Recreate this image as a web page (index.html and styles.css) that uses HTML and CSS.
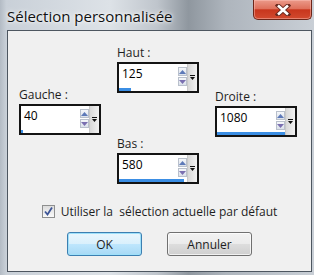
FILE: index.html
```html
<!DOCTYPE html>
<html lang="fr">
<head>
    <meta charset="UTF-8" />
    <title>Sélection personnalisée</title>
    <link rel="stylesheet" href="styles.css">
</head>
<body>
    <div class="window">
        <div class="title-bar">
            <span class="title-text">Sélection personnalisée</span>
            <button type="button" class="close-button" aria-label="Fermer">
                <svg width="16" height="12" viewBox="0 0 16 12"><path d="M3 1.5 L13 10.5 M13 1.5 L3 10.5" stroke="#6b2a20" stroke-width="4.5" stroke-linecap="square"/><path d="M3 1.5 L13 10.5 M13 1.5 L3 10.5" stroke="#fff" stroke-width="2.6"/></svg>
            </button>
        </div>

        <div class="client">
            <div class="fields">
                <div class="field-col field-left">
                    <div class="field">
                        <label class="field-label">Gauche :</label>
                        <div class="spin">
                            <div class="spin-main">
                                <div class="spin-row">
                                    <span class="spin-value">40</span>
                                    <div class="spin-arrows">
                                        <span class="spin-arrow"><svg width="7" height="4" viewBox="0 0 7 4"><path d="M0 4 L3.5 0 L7 4 Z" fill="#5d79b8"/></svg></span>
                                        <span class="spin-arrow"><svg width="7" height="4" viewBox="0 0 7 4"><path d="M0 0 L3.5 4 L7 0 Z" fill="#7a6fb0"/></svg></span>
                                    </div>
                                </div>
                                <div class="spin-bar" style="width: 3%"></div>
                            </div>
                            <div class="spin-drop">
                                <svg width="5" height="5" viewBox="0 0 5 5"><path d="M0 0.5 H5" stroke="#111" stroke-width="1"/><path d="M0 2 L5 2 L2.5 5 Z" fill="#111"/></svg>
                            </div>
                        </div>
                    </div>
                </div>

                <div class="field-col field-center">
                    <div class="field">
                        <label class="field-label">Haut :</label>
                        <div class="spin">
                            <div class="spin-main">
                                <div class="spin-row">
                                    <span class="spin-value">125</span>
                                    <div class="spin-arrows">
                                        <span class="spin-arrow"><svg width="7" height="4" viewBox="0 0 7 4"><path d="M0 4 L3.5 0 L7 4 Z" fill="#5d79b8"/></svg></span>
                                        <span class="spin-arrow"><svg width="7" height="4" viewBox="0 0 7 4"><path d="M0 0 L3.5 4 L7 0 Z" fill="#7a6fb0"/></svg></span>
                                    </div>
                                </div>
                                <div class="spin-bar" style="width: 18%"></div>
                            </div>
                            <div class="spin-drop">
                                <svg width="5" height="5" viewBox="0 0 5 5"><path d="M0 0.5 H5" stroke="#111" stroke-width="1"/><path d="M0 2 L5 2 L2.5 5 Z" fill="#111"/></svg>
                            </div>
                        </div>
                    </div>

                    <div class="field">
                        <label class="field-label">Bas :</label>
                        <div class="spin">
                            <div class="spin-main">
                                <div class="spin-row">
                                    <span class="spin-value">580</span>
                                    <div class="spin-arrows">
                                        <span class="spin-arrow"><svg width="7" height="4" viewBox="0 0 7 4"><path d="M0 4 L3.5 0 L7 4 Z" fill="#5d79b8"/></svg></span>
                                        <span class="spin-arrow"><svg width="7" height="4" viewBox="0 0 7 4"><path d="M0 0 L3.5 4 L7 0 Z" fill="#7a6fb0"/></svg></span>
                                    </div>
                                </div>
                                <div class="spin-bar" style="width: 96%"></div>
                            </div>
                            <div class="spin-drop">
                                <svg width="5" height="5" viewBox="0 0 5 5"><path d="M0 0.5 H5" stroke="#111" stroke-width="1"/><path d="M0 2 L5 2 L2.5 5 Z" fill="#111"/></svg>
                            </div>
                        </div>
                    </div>
                </div>

                <div class="field-col field-right">
                    <div class="field">
                        <label class="field-label">Droite :</label>
                        <div class="spin">
                            <div class="spin-main">
                                <div class="spin-row">
                                    <span class="spin-value">1080</span>
                                    <div class="spin-arrows">
                                        <span class="spin-arrow"><svg width="7" height="4" viewBox="0 0 7 4"><path d="M0 4 L3.5 0 L7 4 Z" fill="#5d79b8"/></svg></span>
                                        <span class="spin-arrow"><svg width="7" height="4" viewBox="0 0 7 4"><path d="M0 0 L3.5 4 L7 0 Z" fill="#7a6fb0"/></svg></span>
                                    </div>
                                </div>
                                <div class="spin-bar" style="width: 100%"></div>
                            </div>
                            <div class="spin-drop">
                                <svg width="5" height="5" viewBox="0 0 5 5"><path d="M0 0.5 H5" stroke="#111" stroke-width="1"/><path d="M0 2 L5 2 L2.5 5 Z" fill="#111"/></svg>
                            </div>
                        </div>
                    </div>
                </div>
            </div>

            <label class="check-row">
                <span class="checkbox">
                    <svg width="9" height="9" viewBox="0 0 9 9"><path d="M1 4.5 L3.5 7.5 L8 0.5" fill="none" stroke="#3d5597" stroke-width="1.8"/></svg>
                </span>
                <span class="check-text">Utiliser la&nbsp; sélection actuelle par défaut</span>
            </label>

            <div class="buttons">
                <button type="button" class="btn btn-default">OK</button>
                <button type="button" class="btn">Annuler</button>
            </div>
        </div>
    </div>
</body>
</html>
```

FILE: styles.css
```css
body {
    margin: 0;
    font-family: "Open Sans", "Noto Sans", sans-serif;
    font-size: 12px;
    color: #1e1e1e;
}

.window {
    width: 314px;
    height: 275px;
    box-sizing: border-box;
    padding: 0 2px 3px 7px;
    display: flex;
    flex-direction: column;
    background:
        linear-gradient(90deg, #b3bbc4 0, #c9d0d8 2%, #dde2e7 35%, #bfc5cc 50%, #8f979f 60%, #aeb5bd 72%, #c9cfd6 100%);
}

.title-bar {
    height: 30px;
    display: flex;
    justify-content: space-between;
    align-items: flex-start;
}

.title-text {
    font-size: 15px;
    line-height: 20px;
    padding-top: 6px;
    color: #111;
    text-shadow: 0 0 6px #fff, 0 0 3px #fff;
}

.close-button {
    width: 59px;
    height: 20px;
    padding: 0;
    border: 1px solid #6e2619;
    border-top: none;
    border-radius: 0 0 5px 5px;
    background: linear-gradient(#eb9a8a 0, #df715c 45%, #c8361d 52%, #d24a2f 100%);
    display: flex;
    justify-content: center;
    align-items: center;
    box-shadow: inset 0 0 0 1px rgba(255, 200, 190, .45);
}

.client {
    flex: 1;
    border: 1px solid #4d5660;
    background-color: #f0f0f0;
    display: flex;
    flex-direction: column;
}

.fields {
    display: flex;
    align-items: flex-start;
    gap: 16px;
    padding: 14px 0 0 11px;
}

.field-col {
    width: 82px;
}

.field-left {
    margin-top: 42px;
}

.field-right {
    margin-top: 44px;
}

.field-center {
    display: flex;
    flex-direction: column;
    gap: 43px;
}

.field-label {
    display: block;
    line-height: 16px;
    margin-bottom: 1px;
}

.spin {
    display: flex;
    height: 31px;
    box-sizing: border-box;
    border: 2px solid #141414;
    background: #fff;
}

.spin-main {
    flex: 1;
    display: flex;
    flex-direction: column;
}

.spin-row {
    flex: 1;
    display: flex;
    justify-content: space-between;
    padding: 2px 0 0 3px;
}

.spin-value {
    font-size: 12px;
    line-height: 16px;
    color: #000;
}

.spin-arrows {
    display: flex;
    flex-direction: column;
    gap: 1px;
    padding-top: 1px;
}

.spin-arrow {
    width: 9px;
    height: 9px;
    box-sizing: border-box;
    border: 1px solid #b9c0cc;
    background: linear-gradient(#f5f7fa, #dbe1ea);
    display: flex;
    justify-content: center;
    align-items: center;
}

.spin-bar {
    height: 3px;
    background-color: #3b8ee4;
}

.spin-drop {
    width: 9px;
    background: linear-gradient(90deg, #d8d8d8, #f2f2f2);
    border-left: 1px solid #c8c8c8;
    display: flex;
    justify-content: center;
    align-items: center;
}

.check-row {
    display: flex;
    justify-content: center;
    align-items: center;
    gap: 6px;
    margin-top: 19px;
}

.checkbox {
    width: 13px;
    height: 13px;
    box-sizing: border-box;
    border: 1px solid #8e8f8f;
    background: linear-gradient(#dcdcdc, #fafafa);
    display: flex;
    justify-content: center;
    align-items: center;
}

.check-text {
    font-size: 12px;
}

.buttons {
    display: flex;
    justify-content: center;
    gap: 25px;
    margin-top: 12px;
}

.btn {
    width: 85px;
    height: 24px;
    font-family: inherit;
    font-size: 12px;
    color: #1e1e1e;
    border: 1px solid #707070;
    border-radius: 3px;
    background: linear-gradient(#f2f2f2 0, #ebebeb 50%, #dddddd 51%, #cfcfcf 100%);
    box-shadow: inset 0 0 0 1px rgba(255, 255, 255, .7);
}

.btn-default {
    width: 75px;
    border-color: #3c7fb1;
    background: linear-gradient(#eaf6fd 0, #d9f0fc 50%, #bee6fd 51%, #a7d9f5 100%);
    box-shadow: inset 0 0 0 1px #9ee0fa;
}
```
